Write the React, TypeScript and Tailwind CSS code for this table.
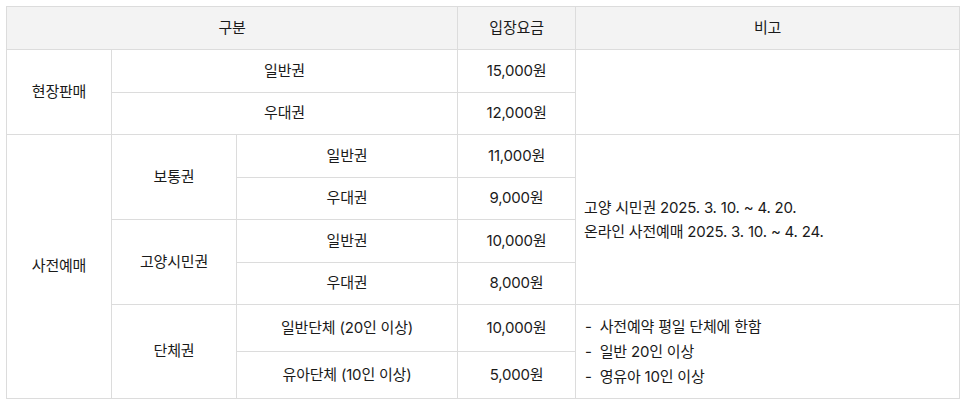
import React from "react";

const B = "border border-[#dcdcdc]";

export default function App() {
  return (
    <div className="w-[964px] h-[409px] bg-white pt-[6px] pl-[6px]" style={{ fontFamily: 'Inter, "Noto Sans CJK KR", "Noto Sans", sans-serif' }}>
      <table className="border-collapse text-[15px] tracking-[-0.2px] text-[#1a1a1a] table-fixed w-[953px]">
        <colgroup>
          <col className="w-[105px]" />
          <col className="w-[125px]" />
          <col className="w-[221px]" />
          <col className="w-[118px]" />
          <col className="w-[384px]" />
        </colgroup>
        <tbody>
          <tr className="h-[43px] bg-[#f3f3f3]">
            <td colSpan={3} className={`${B} text-center`}>구분</td>
            <td className={`${B} text-center`}>입장요금</td>
            <td className={`${B} text-center`}>비고</td>
          </tr>
          <tr className="h-[43px]">
            <td rowSpan={2} className={`${B} text-center`}>현장판매</td>
            <td colSpan={2} className={`${B} text-center`}>일반권</td>
            <td className={`${B} text-center`}>15,000원</td>
            <td rowSpan={2} className={B}></td>
          </tr>
          <tr className="h-[42px]">
            <td colSpan={2} className={`${B} text-center`}>우대권</td>
            <td className={`${B} text-center`}>12,000원</td>
          </tr>
          <tr className="h-[43px]">
            <td rowSpan={6} className={`${B} text-center`}>사전예매</td>
            <td rowSpan={2} className={`${B} text-center`}>보통권</td>
            <td className={`${B} text-center`}>일반권</td>
            <td className={`${B} text-center`}>11,000원</td>
            <td rowSpan={4} className={`${B} pl-[8px] leading-[24px]`}>
              <div>고양 시민권 2025. 3. 10. ~ 4. 20.</div>
              <div>온라인 사전예매 2025. 3. 10. ~ 4. 24.</div>
            </td>
          </tr>
          <tr className="h-[42px]">
            <td className={`${B} text-center`}>우대권</td>
            <td className={`${B} text-center`}>9,000원</td>
          </tr>
          <tr className="h-[43px]">
            <td rowSpan={2} className={`${B} text-center`}>고양시민권</td>
            <td className={`${B} text-center`}>일반권</td>
            <td className={`${B} text-center`}>10,000원</td>
          </tr>
          <tr className="h-[42px]">
            <td className={`${B} text-center`}>우대권</td>
            <td className={`${B} text-center`}>8,000원</td>
          </tr>
          <tr className="h-[47px]">
            <td rowSpan={2} className={`${B} text-center`}>단체권</td>
            <td className={`${B} text-center`}>일반단체 (20인 이상)</td>
            <td className={`${B} text-center`}>10,000원</td>
            <td rowSpan={2} className={`${B} pl-[9px] leading-[25px]`}>
              <div className="flex gap-[8px]"><span>-</span><span>사전예약 평일 단체에 한함</span></div>
              <div className="flex gap-[8px]"><span>-</span><span>일반 20인 이상</span></div>
              <div className="flex gap-[8px]"><span>-</span><span>영유아 10인 이상</span></div>
            </td>
          </tr>
          <tr className="h-[47px]">
            <td className={`${B} text-center`}>유아단체 (10인 이상)</td>
            <td className={`${B} text-center`}>5,000원</td>
          </tr>
        </tbody>
      </table>
    </div>
  );
}
